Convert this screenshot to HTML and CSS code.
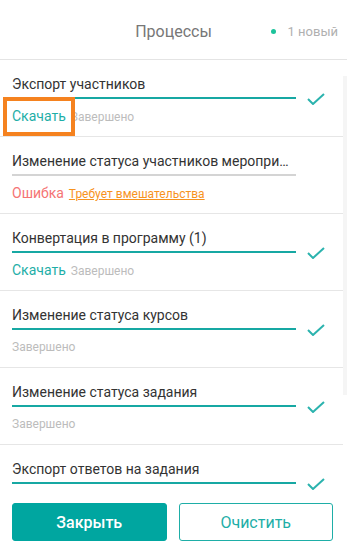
FILE: index.html
```html
<!DOCTYPE html>
<html lang="ru">
<head>
<meta charset="utf-8">
<title>Процессы</title>
<link rel="stylesheet" href="styles.css">
</head>
<body>
<div class="panel">
  <header class="header">
    <span></span>
    <h1 class="title">Процессы</h1>
    <div class="new"><span class="dot"></span>1 новый</div>
  </header>
  <div class="list">
    <div class="thumb"></div>
    <div class="item">
      <div class="name">Экспорт участников</div>
      <div class="bar-row"><span class="bar done"></span><svg class="check" viewBox="0 0 18 12"><polyline points="1,6 6,11 17,1"/></svg></div>
      <div class="status"><a class="link highlight">Скачать</a><span class="muted">Завершено</span></div>
    </div>
    <div class="item">
      <div class="name">Изменение статуса участников мероприятия</div>
      <div class="bar-row"><span class="bar failed"></span></div>
      <div class="status"><span class="error">Ошибка</span><a class="warn">Требует вмешательства</a></div>
    </div>
    <div class="item">
      <div class="name">Конвертация в программу (1)</div>
      <div class="bar-row"><span class="bar done"></span><svg class="check" viewBox="0 0 18 12"><polyline points="1,6 6,11 17,1"/></svg></div>
      <div class="status"><a class="link">Скачать</a><span class="muted">Завершено</span></div>
    </div>
    <div class="item">
      <div class="name">Изменение статуса курсов</div>
      <div class="bar-row"><span class="bar done"></span><svg class="check" viewBox="0 0 18 12"><polyline points="1,6 6,11 17,1"/></svg></div>
      <div class="status"><span class="muted">Завершено</span></div>
    </div>
    <div class="item">
      <div class="name">Изменение статуса задания</div>
      <div class="bar-row"><span class="bar done"></span><svg class="check" viewBox="0 0 18 12"><polyline points="1,6 6,11 17,1"/></svg></div>
      <div class="status"><span class="muted">Завершено</span></div>
    </div>
    <div class="item">
      <div class="name">Экспорт ответов на задания</div>
      <div class="bar-row"><span class="bar done"></span><svg class="check" viewBox="0 0 18 12"><polyline points="1,6 6,11 17,1"/></svg></div>
      <div class="status"><span class="muted">Завершено</span></div>
    </div>
  </div>
  <footer class="footer">
    <button class="btn primary">Закрыть</button>
    <button class="btn outline">Очистить</button>
  </footer>
</div>
</body>
</html>
```

FILE: styles.css
```css
html, body {
  margin: 0;
  padding: 0;
  background: #fff;
}
body {
  font-family: Roboto, "Liberation Sans", sans-serif;
  color: #333;
}
.panel {
  height: 100vh;
  display: flex;
  flex-direction: column;
  overflow: hidden;
}
.header {
  height: 59px;
  border-bottom: 1px solid #e4e4e4;
  display: grid;
  grid-template-columns: 1fr auto 1fr;
  align-items: center;
  flex: none;
}
.title {
  margin: 0;
  font-size: 16px;
  font-weight: 400;
  color: #777;
  padding-top: 4px;
}
.new {
  justify-self: end;
  padding-right: 9px;
  padding-top: 4px;
  font-size: 13px;
  color: #b0b0b0;
  display: flex;
  align-items: center;
}
.dot {
  width: 5px;
  height: 5px;
  border-radius: 50%;
  background: #1cc39b;
  margin-right: 12px;
}
.list {
  flex: 1;
  overflow: hidden;
  position: relative;
}
.thumb {
  position: absolute;
  right: 0;
  top: 16px;
  width: 4px;
  height: 319px;
  background: #f5f5f5;
}
.item {
  padding: 14px 0 10px 12px;
  margin-right: 4px;
  border-bottom: 1px solid #e6e6e6;
}
.name {
  width: 284px;
  font-size: 14px;
  line-height: 20px;
  color: #333;
  white-space: nowrap;
  overflow: hidden;
  text-overflow: ellipsis;
}
.bar-row {
  height: 12px;
  margin-top: -2px;
  display: flex;
  align-items: center;
}
.bar {
  width: 284px;
  height: 2px;
  flex: none;
}
.bar.done { background: #17a8a3; }
.bar.failed { background: #d4d4d4; }
.check {
  width: 18px;
  height: 12px;
  margin-left: 11px;
  margin-top: 1px;
  fill: none;
  stroke: #2bb3ae;
  stroke-width: 2;
}
.status {
  margin-top: 2px;
  height: 20px;
  display: flex;
  align-items: baseline;
  line-height: 20px;
}
.link {
  font-size: 14px;
  color: #1eaea7;
  margin-right: 5px;
  cursor: pointer;
}
.highlight {
  position: relative;
}
.highlight::after {
  content: "";
  position: absolute;
  left: -9px;
  top: -9px;
  width: 64px;
  height: 31px;
  border: 4px solid #f5821f;
}
.muted {
  font-size: 12px;
  color: #bcbcbc;
}
.error {
  font-size: 14px;
  color: #f57474;
  margin-right: 5px;
}
.warn {
  font-size: 12px;
  color: #f7931e;
  text-decoration: underline;
}
.footer {
  flex: none;
  padding: 8px 14px 10px 12px;
  display: grid;
  grid-template-columns: 1fr 1fr;
  gap: 12px;
  background: #fff;
}
.btn {
  height: 38px;
  border-radius: 3px;
  font-family: Roboto, "Liberation Sans", sans-serif;
  font-size: 16px;
  font-weight: 500;
  cursor: pointer;
}
.primary {
  background: #00a6a0;
  border: 1px solid #00a6a0;
  color: #fff;
}
.outline {
  background: #fff;
  border: 1px solid #1eaea7;
  color: #1eaea7;
  font-weight: 400;
}
```
